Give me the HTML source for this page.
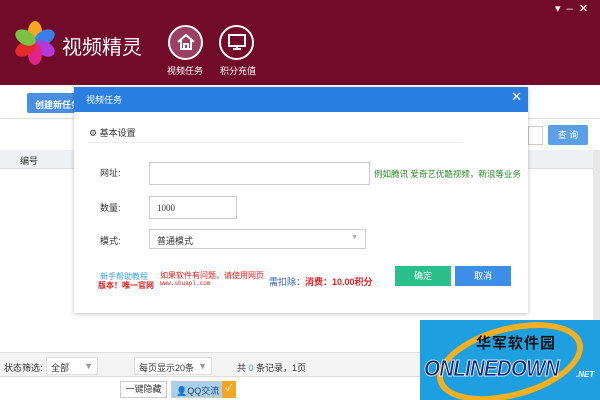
<!DOCTYPE html>
<html><head><meta charset="utf-8"><style>
*{margin:0;padding:0;box-sizing:border-box}
body{width:600px;height:400px;overflow:hidden;position:relative;background:#fff;font-family:"Liberation Sans","Noto Sans CJK SC",sans-serif;font-size:9px;color:#333}
.a{position:absolute}
</style></head><body>
<div class="a" style="left:0;top:0;width:600px;height:85px;background:#720a2a"></div>
<svg class="a" style="left:12px;top:20px" width="46" height="46" viewBox="-23 -23 46 46">
<g>
<ellipse cx="0" cy="-11" rx="7" ry="11" fill="#f5a623"/>
<ellipse cx="0" cy="-11" rx="7" ry="11" fill="#3a7ee8" transform="rotate(60)"/>
<ellipse cx="0" cy="-11" rx="7" ry="11" fill="#b23adb" transform="rotate(120)"/>
<ellipse cx="0" cy="-11" rx="7" ry="11" fill="#e0248a" transform="rotate(180)"/>
<ellipse cx="0" cy="-11" rx="7" ry="11" fill="#e62a2a" transform="rotate(240)"/>
<ellipse cx="0" cy="-11" rx="7" ry="11" fill="#7ac142" transform="rotate(300)"/>
</g></svg>
<div class="a" style="left:62px;top:31px;font-size:20px;color:#fff">视频精灵</div>
<div class="a" style="left:168px;top:25px;width:35px;height:35px;border-radius:50%;border:2px solid #fff;background:#9a4060"></div>
<svg class="a" style="left:176px;top:33px" width="20" height="18" viewBox="0 0 20 18"><path d="M2 9 L10 2 L18 9 M5 7 V16 H15 V7 M8 16 V11 H12 V16" fill="none" stroke="#fff" stroke-width="2"/></svg>
<div class="a" style="left:167px;top:64px;color:#fff">视频任务</div>
<div class="a" style="left:219px;top:25px;width:35px;height:35px;border-radius:50%;border:2px solid #fff"></div>
<svg class="a" style="left:227px;top:33px" width="20" height="18" viewBox="0 0 20 18"><rect x="2" y="2" width="16" height="11" fill="none" stroke="#fff" stroke-width="2"/><path d="M10 13V16M6 16H14" stroke="#fff" stroke-width="2"/></svg>
<div class="a" style="left:220px;top:64px;color:#fff">积分充值</div>
<div class="a" style="left:555px;top:2px;color:#fff;font-size:11px">▾ &nbsp;– &nbsp;✕</div>
<div class="a" style="left:27px;top:93px;width:60px;height:20px;background:#4a90e2;border-radius:2px;color:#fff;font-weight:bold;padding:5px 0 0 8px">创建新任务</div>
<div class="a" style="left:0;top:118px;width:600px;height:1px;background:#ddd"></div>
<div class="a" style="left:528px;top:126px;width:15px;height:19px;border:1px solid #ccc"></div>
<div class="a" style="left:548px;top:125px;width:40px;height:20px;background:#5ba0e6;border-radius:2px;color:#fff;text-align:center;line-height:20px">查 询</div>
<div class="a" style="left:0;top:150px;width:593px;height:19px;background:#eef0f3;border-bottom:1px solid #ddd"></div>
<div class="a" style="left:20px;top:154px">编号</div>
<div class="a" style="left:593px;top:150px;width:7px;height:230px;background:#e8e8e8"></div>
<div class="a" style="left:0;top:352px;width:600px;height:25px;background:#f3f3f3;border-top:1px solid #ddd;border-bottom:1px solid #ddd"></div>
<div class="a" style="left:4px;top:361px">状态筛选:</div>
<div class="a" style="left:46px;top:357px;width:52px;height:18px;background:#fff;border:1px solid #ddd;padding:3px 4px">全部<span style="float:right;color:#999">▼</span></div>
<div class="a" style="left:134px;top:357px;width:78px;height:18px;background:#fff;border:1px solid #ddd;padding:3px 4px">每页显示20条<span style="float:right;color:#999">▼</span></div>
<div class="a" style="left:237px;top:361px">共 <span style="color:#39f">0</span> 条记录，1页</div>
<div class="a" style="left:120px;top:381px;width:47px;height:17px;border:1px solid #ccc;background:#fff;text-align:center;line-height:15px">一键隐藏</div>
<div class="a" style="left:171px;top:381px;width:51px;height:17px;background:#a8cfee;border:1px solid #ccc;padding:2px 0 0 4px;color:#246">👤QQ交流</div>
<div class="a" style="left:222px;top:381px;width:14px;height:17px;background:#f5a623;color:#fff;text-align:center">✓</div>
<div class="a" style="left:74px;top:87px;width:454px;height:226px;background:#fff;box-shadow:0 1px 4px rgba(0,0,0,.25)"></div>
<div class="a" style="left:74px;top:87px;width:454px;height:25px;background:#2a7fe0;color:#fff;padding:6px 12px">视频任务<span style="position:absolute;right:6px;top:2px;font-size:13px">✕</span></div>
<div class="a" style="left:89px;top:126px;font-size:9px">⚙ 基本设置</div>
<div class="a" style="left:88px;top:142px;width:375px;height:1px;background:#eee"></div>
<div class="a" style="left:100px;top:166px">网址:</div>
<div class="a" style="left:149px;top:162px;width:221px;height:23px;border:1px solid #ccc"></div>
<div class="a" style="left:374px;top:168px;color:#2a8a2a;font-size:8.5px">例如腾讯 爱奇艺优酷视频，新浪等业务</div>
<div class="a" style="left:100px;top:201px">数量:</div>
<div class="a" style="left:149px;top:196px;width:88px;height:23px;border:1px solid #ccc;padding:6px 7px;font-family:'Liberation Serif',serif">1000</div>
<div class="a" style="left:100px;top:234px">模式:</div>
<div class="a" style="left:149px;top:229px;width:217px;height:20px;border:1px solid #ccc;padding:4px 7px">普通模式<span style="float:right;color:#aaa;font-size:7px">▼</span></div>
<div class="a" style="left:100px;top:271px;color:#39a0e0;font-size:8px">新手帮助教程</div>
<div class="a" style="left:98px;top:280px;color:#e02020;font-size:8px;font-weight:bold">版本！唯一官网</div>
<div class="a" style="left:160px;top:270px;color:#e02020;font-size:8px">如果软件有问题，请使用网页</div>
<div class="a" style="left:160px;top:280px;color:#e02020;font-size:6px;font-family:'Liberation Mono',monospace">www.shuapl.com</div>
<div class="a" style="left:269px;top:275px;color:#3060b0;font-size:9px">需扣除：<b style="color:#e02020">消费：10.00积分</b></div>
<div class="a" style="left:395px;top:266px;width:56px;height:20px;background:#2bbf8c;color:#fff;text-align:center;line-height:20px">确定</div>
<div class="a" style="left:455px;top:266px;width:56px;height:20px;background:#3c8ee6;color:#fff;text-align:center;line-height:20px">取消</div>
<div class="a" style="left:420px;top:320px;width:180px;height:80px;background:#1e9fe0;overflow:hidden">
<div class="a" style="left:15px;top:6px;width:150px;height:72px;border:6px solid #f5b020;border-radius:50%;transform:rotate(-15deg)"></div>
<div class="a" style="left:56px;top:12px;font-size:15px;color:#111;font-weight:bold;letter-spacing:1px">华军软件园</div>
<div class="a" style="left:4px;top:35px;font-size:23px;color:#0a2a80;font-weight:bold;font-style:italic;-webkit-text-stroke:0.8px #fff;letter-spacing:-1px;transform:scaleX(0.9);transform-origin:left">ONLINEDOWN</div>
<div class="a" style="left:156px;top:50px;font-size:8px;color:#fff;font-style:italic;font-weight:bold">.NET</div>
</div>
</body></html>
